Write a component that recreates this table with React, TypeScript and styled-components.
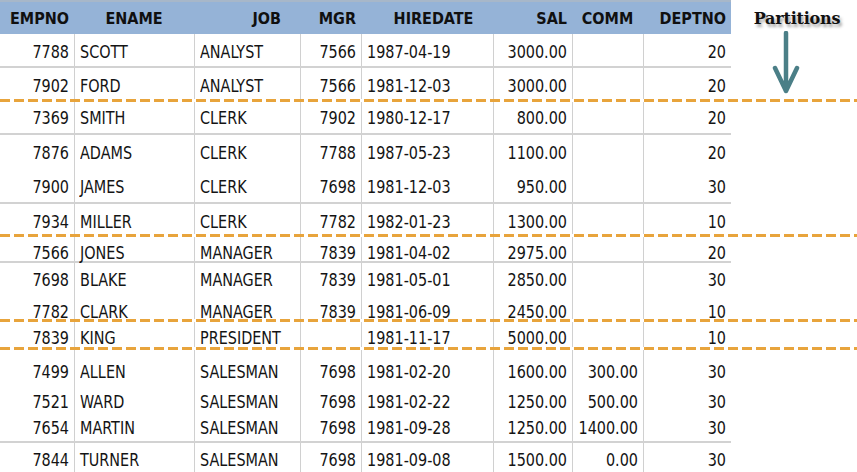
import React from "react";
import styled, { createGlobalStyle } from "styled-components";

const Global = createGlobalStyle`
  html, body { margin: 0; padding: 0; background: #ffffff; }
  body { width: 857px; height: 472px; overflow: hidden; }
`;

const COLS = "74px 120px 106px 61px 132px 79px 71px 88px";

type Align = "left" | "right" | "center";

const Page = styled.div`
  position: relative;
  width: 857px;
  height: 472px;
  display: flex;
  flex-direction: column;
  align-items: flex-start;
  font-family: "DejaVu Sans Condensed", "DejaVu Sans", sans-serif;
  color: #141414;
  overflow: hidden;
`;

const HeaderRow = styled.div`
  display: grid;
  grid-template-columns: ${COLS};
  width: 731px;
  height: 34px;
  box-sizing: border-box;
  background: #95b3d7;
  border-top: 2px solid #a7b7c9;
`;

const HeadCell = styled.div<{ $align: Align; $pl: number; $pr: number }>`
  display: flex;
  align-items: center;
  justify-content: ${(p) =>
    p.$align === "right" ? "flex-end" : p.$align === "center" ? "center" : "flex-start"};
  padding: 0 ${(p) => p.$pr}px 0 ${(p) => p.$pl}px;
  font-weight: bold;
  font-size: 16px;
  color: #101010;
  white-space: nowrap;
`;

const Row = styled.div<{ $h: number; $lined: boolean }>`
  display: grid;
  grid-template-columns: ${COLS};
  width: 731px;
  height: ${(p) => p.$h}px;
  box-sizing: border-box;
  border-bottom: ${(p) => (p.$lined ? "2px solid #d2d2d2" : "none")};
`;

const Cell = styled.div<{ $align: Align; $pt: number; $first: boolean }>`
  box-sizing: border-box;
  min-height: 0;
  padding: ${(p) => p.$pt}px 5px 0 5px;
  text-align: ${(p) => p.$align};
  border-left: ${(p) => (p.$first ? "none" : "1px solid #d0d0d0")};
  font-size: 16px;
  line-height: 20px;
  white-space: nowrap;
`;

const CellText = styled.span`
  display: inline-block;
  transform: scaleY(1.12);
  transform-origin: center;
`;

const Divider = styled.div`
  position: relative;
  z-index: 2;
  width: 857px;
  height: 3px;
  flex: none;
  background: repeating-linear-gradient(
    to right,
    #e8a43c 0px,
    #e8a43c 10px,
    transparent 10px,
    transparent 14px
  );
`;

const Annotation = styled.div`
  position: absolute;
  left: 742px;
  top: 10px;
  width: 110px;
  display: flex;
  flex-direction: column;
  align-items: center;
`;

const Label = styled.div`
  font-family: "DejaVu Serif", "Liberation Serif", serif;
  font-weight: bold;
  font-size: 16px;
  line-height: 18px;
  letter-spacing: -0.2px;
  color: #111;
  text-shadow: 2px 3px 3px rgba(0, 0, 0, 0.35);
`;

const ArrowSvg = styled.svg`
  margin-top: 3px;
  margin-left: -22px;
`;

const cols: { key: string; head: string; align: Align; ha: Align; pl: number; pr: number }[] = [
  { key: "empno", head: "EMPNO", align: "right", ha: "right", pl: 0, pr: 5 },
  { key: "ename", head: "ENAME", align: "left", ha: "center", pl: 0, pr: 0 },
  { key: "job", head: "JOB", align: "left", ha: "right", pl: 0, pr: 19 },
  { key: "mgr", head: "MGR", align: "right", ha: "right", pl: 0, pr: 5 },
  { key: "hiredate", head: "HIREDATE", align: "left", ha: "center", pl: 13, pr: 0 },
  { key: "sal", head: "SAL", align: "right", ha: "right", pl: 0, pr: 5 },
  { key: "comm", head: "COMM", align: "right", ha: "center", pl: 0, pr: 0 },
  { key: "deptno", head: "DEPTNO", align: "right", ha: "right", pl: 0, pr: 5 },
];

type Emp = {
  d: string[];
  h: number;
  pt: number;
  lined?: boolean;
  divider?: boolean;
};

const rows: Emp[] = [
  { d: ["7788", "SCOTT", "ANALYST", "7566", "1987-04-19", "3000.00", "", "20"], h: 34, pt: 8, lined: true },
  { d: ["7902", "FORD", "ANALYST", "7566", "1981-12-03", "3000.00", "", "20"], h: 31, pt: 8, divider: true },
  { d: ["7369", "SMITH", "CLERK", "7902", "1980-12-17", "800.00", "", "20"], h: 33, pt: 6, lined: true },
  { d: ["7876", "ADAMS", "CLERK", "7788", "1987-05-23", "1100.00", "", "20"], h: 35, pt: 8 },
  { d: ["7900", "JAMES", "CLERK", "7698", "1981-12-03", "950.00", "", "30"], h: 34, pt: 7, lined: true },
  { d: ["7934", "MILLER", "CLERK", "7782", "1982-01-23", "1300.00", "", "10"], h: 30, pt: 8, divider: true },
  { d: ["7566", "JONES", "MANAGER", "7839", "1981-04-02", "2975.00", "", "20"], h: 26, pt: 6, lined: true },
  { d: ["7698", "BLAKE", "MANAGER", "7839", "1981-05-01", "2850.00", "", "30"], h: 33, pt: 7 },
  { d: ["7782", "CLARK", "MANAGER", "7839", "1981-06-09", "2450.00", "", "10"], h: 23, pt: 6, divider: true },
  { d: ["7839", "KING", "PRESIDENT", "", "1981-11-17", "5000.00", "", "10"], h: 25, pt: 6, divider: true },
  { d: ["7499", "ALLEN", "SALESMAN", "7698", "1981-02-20", "1600.00", "300.00", "30"], h: 37, pt: 12 },
  { d: ["7521", "WARD", "SALESMAN", "7698", "1981-02-22", "1250.00", "500.00", "30"], h: 29, pt: 5 },
  { d: ["7654", "MARTIN", "SALESMAN", "7698", "1981-09-28", "1250.00", "1400.00", "30"], h: 27, pt: 2, lined: true },
  { d: ["7844", "TURNER", "SALESMAN", "7698", "1981-09-08", "1500.00", "0.00", "30"], h: 29, pt: 7 },
];

export default function App() {
  return (
    <>
      <Global />
      <Page>
        <HeaderRow>
          {cols.map((c) => (
            <HeadCell key={c.key} $align={c.ha} $pl={c.pl} $pr={c.pr}>
              {c.head}
            </HeadCell>
          ))}
        </HeaderRow>
        {rows.map((r) => (
          <React.Fragment key={r.d[0]}>
            <Row $h={r.h} $lined={!!r.lined}>
              {cols.map((c, i) => (
                <Cell key={c.key} $align={c.align} $pt={r.pt} $first={i === 0}>
                  <CellText>{r.d[i]}</CellText>
                </Cell>
              ))}
            </Row>
            {r.divider && <Divider />}
          </React.Fragment>
        ))}
        <Annotation>
          <Label>Partitions</Label>
          <ArrowSvg width="28" height="64" viewBox="0 0 28 64">
            <path
              d="M14 2 L14 60 M3 37 L14 60 L25 37"
              fill="none"
              stroke="#4b7f87"
              strokeWidth="4.5"
              strokeLinecap="round"
              strokeLinejoin="round"
            />
          </ArrowSvg>
        </Annotation>
      </Page>
    </>
  );
}
